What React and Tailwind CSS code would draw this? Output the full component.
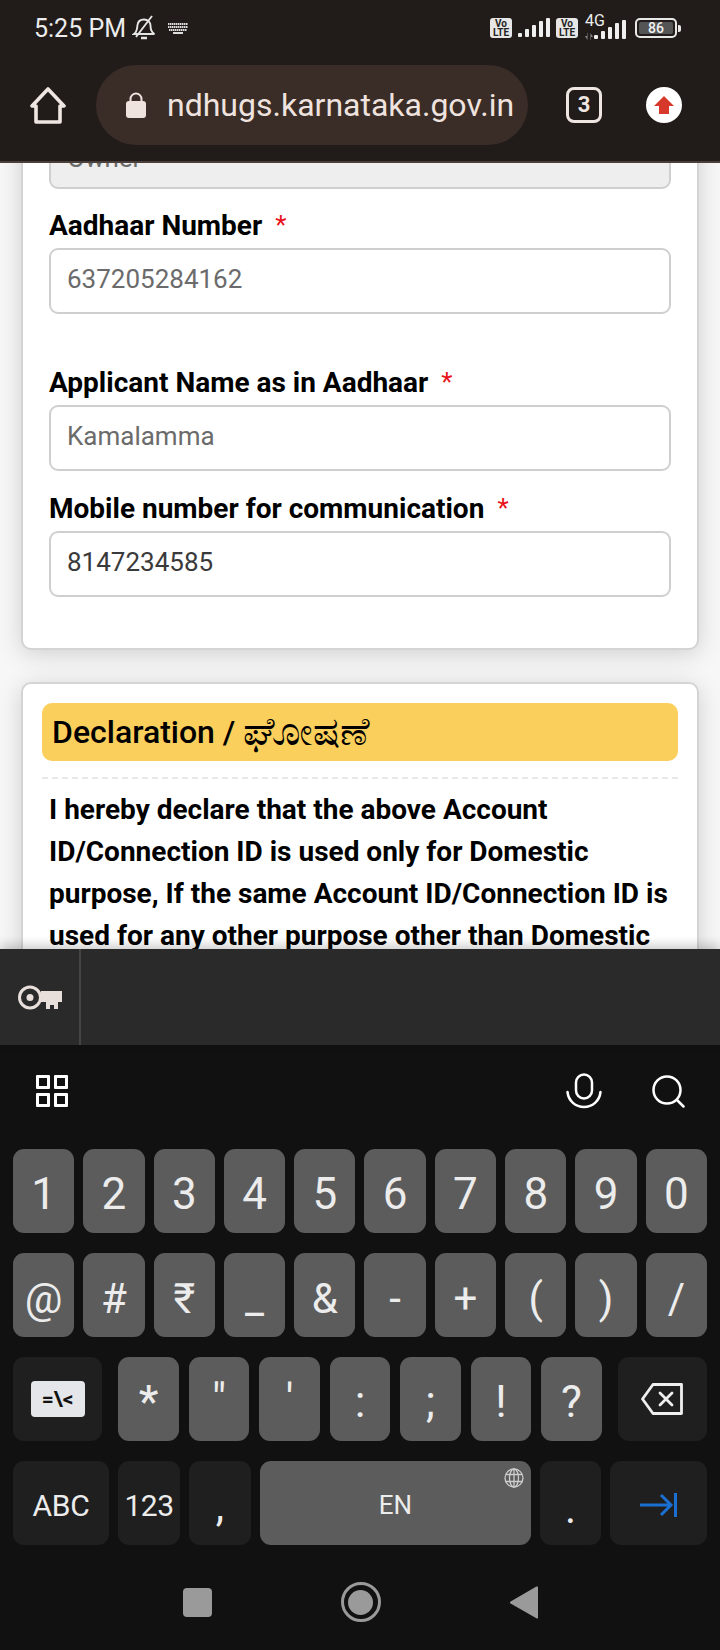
import { ChevronDown } from 'lucide-react';

const row1 = ['1', '2', '3', '4', '5', '6', '7', '8', '9', '0'];
const row2 = ['@', '#', '₹', '_', '&', '-', '+', '(', ')', '/'];
const row3 = ['*', '"', "'", ':', ';', '!', '?'];

function Signal() {
  return (
    <svg width="32" height="20" viewBox="0 0 32 20" fill="#efefef">
      <rect x="0" y="15" width="4" height="4" rx="1" />
      <rect x="7" y="11" width="4" height="8" rx="1" />
      <rect x="14" y="7" width="4" height="12" rx="1" />
      <rect x="21" y="3" width="4" height="16" rx="1" />
      <rect x="28" y="0" width="4" height="19" rx="1" />
    </svg>
  );
}

function VoLte() {
  return (
    <div className="w-[22px] h-[20px] bg-[#e6e6e6] rounded-[3px] flex flex-col items-center justify-center text-[#222] text-[10px] leading-[9px] font-bold">
      <span>Vo</span>
      <span>LTE</span>
    </div>
  );
}

function StatusBar() {
  return (
    <div className="h-[56px] flex items-center pl-[34px] pr-[39px] text-[#ececec]">
      <span className="text-[25px] leading-none">5:25 PM</span>
      <svg className="ml-[6px]" width="24" height="26" viewBox="0 0 24 26" fill="none" stroke="#e4e4e4" strokeWidth="1.900">
        <path d="M2 19c3-2 3-5 3.500-9C6 6 9 4.500 12 4.500c4 0 6.500 3 6.500 6 0 4 1 7 4 8.500H2z" />
        <path d="M20 1L4 22" />
        <path d="M9 23h6" strokeWidth="2.500" />
      </svg>
      <svg className="ml-[12px]" width="20" height="11" viewBox="0 0 20 11" fill="none" stroke="#dcdcdc" strokeWidth="2">
        <path d="M0 1h20M0 4h20M1 7h18" strokeDasharray="1.500 0.500" />
        <path d="M5 10h10" />
      </svg>
      <div className="ml-auto flex items-center">
        <VoLte />
        <div className="ml-[6px]"><Signal /></div>
        <div className="ml-[6px]"><VoLte /></div>
        <div className="ml-[6px] relative w-[42px] h-[23px] flex items-end justify-end">
          <span className="absolute left-[1px] top-[-4px] text-[16px] leading-[16px]">4G</span>
          <svg className="absolute left-0 bottom-0" width="11" height="7" viewBox="0 0 11 7" fill="#8a8a8a">
            <path d="M3 0v3H1L3.500 7V0zM7 7V4h2L6.500 0v7z" />
          </svg>
          <Signal />
        </div>
        <div className="ml-[9px] w-[42px] h-[20px] border-2 border-[#e8e8e8] rounded-[5px] p-[2px]">
          <div className="h-full bg-[#555] rounded-[2px] flex items-center justify-center text-[14px] leading-none font-medium text-[#f0f0f0]">86</div>
        </div>
        <div className="ml-[1px] w-[3px] h-[7px] bg-[#e8e8e8] rounded-r-[2px]" />
      </div>
    </div>
  );
}

function Toolbar() {
  return (
    <div className="h-[107px] flex items-start pt-[9px] pl-[30px] border-b-2 border-[#4a3f3a]">
      <svg className="mt-[22px]" width="36" height="37" viewBox="0 0 36 37" fill="none" stroke="#efe6e2" strokeWidth="3.600" strokeLinejoin="round" strokeLinecap="round">
        <path d="M2 19L18 2l16 17h-4v16H6V19z" />
      </svg>
      <div className="ml-[30px] w-[432px] h-[80px] rounded-full bg-[#3a2c27] flex items-center pl-[30px]">
        <svg width="20" height="26" viewBox="0 0 20 26" fill="#efe3df">
          <path d="M4.500 10V7a5.500 5.500 0 0 1 11 0v3" fill="none" stroke="#efe3df" strokeWidth="2" />
          <rect x="0" y="9" width="20" height="17" rx="3" />
        </svg>
        <span className="ml-[21px] text-[32px] leading-none text-[#efe3df]">ndhugs.karnataka.gov.in</span>
      </div>
      <div className="ml-[38px] mt-[22px] w-[36px] h-[36px] border-[3px] border-[#efe6e2] rounded-[8px] flex items-center justify-center text-[#efe6e2] text-[22px] font-bold leading-none">3</div>
      <div className="ml-[44px] mt-[22px] w-[36px] h-[36px] rounded-full bg-white flex items-center justify-center">
        <svg width="20" height="18" viewBox="0 0 20 18" fill="#d6392b">
          <path d="M10 0l10 10h-5v8H5v-8H0z" />
        </svg>
      </div>
    </div>
  );
}

function Field({ label, value, dark, className }) {
  return (
    <div className={className}>
      <div className="h-[26px] flex items-center text-[28px] font-bold text-black leading-none">
        {label}
        <span className="ml-[13px] text-[#e8131b] font-normal text-[26px] self-start leading-[24px]">*</span>
      </div>
      <div className={`mt-[9px] h-[66px] border-2 border-[#cfcfcf] rounded-[9px] bg-white flex items-center px-[16px] pb-[3px] text-[26px] ${dark ? 'text-[#3a3a3a]' : 'text-[#6b6b6b]'}`}>
        {value}
      </div>
    </div>
  );
}

function Page() {
  return (
    <div className="h-[786px] overflow-hidden bg-[#f7f7f7] px-[21px]">
      <div className="-mt-[40px] h-[527px] bg-white border-2 border-[#d4d4d4] rounded-[10px] px-[26px] shadow-[0_4px_24px_rgba(0,0,0,0.16)]">
        <div className="h-[66px] -mt-[2px] border-2 border-[#cfcfcf] rounded-[9px] bg-[#eeeeee] flex items-center justify-between pl-[16px] pr-[10px] pt-[5px] text-[26px] text-[#6b6b6b]">
          Owner
          <ChevronDown size={14} className="text-[#555]" />
        </div>
        <Field className="mt-[24px]" label="Aadhaar Number" value="637205284162" />
        <Field className="mt-[56px]" label="Applicant Name as in Aadhaar" value="Kamalamma" />
        <Field className="mt-[25px]" label="Mobile number for communication" value="8147234585" dark />
      </div>
      <div className="mt-[32px] bg-white border-2 border-[#d4d4d4] rounded-[10px] px-[19px] pt-[19px] h-[400px] shadow-[0_4px_24px_rgba(0,0,0,0.16)]">
        <div className="h-[58px] bg-[#fbcf5b] rounded-[10px] flex items-center pl-[10px] text-[32px] font-medium text-black leading-none font-[Roboto,'Noto_Sans','DejaVu_Sans',sans-serif]">
          Declaration /&nbsp;<span className="text-[40px] font-normal">ಘೋಷಣೆ</span>
        </div>
        <div className="mt-[16px] border-t-2 border-dashed border-[#e8e8e8]" />
        <p className="mt-[10px] pl-[7px] text-[28px] leading-[42px] font-bold text-black">
          I hereby declare that the above Account ID/Connection ID is used only for Domestic purpose, If the same Account ID/Connection ID is used for any other purpose other than Domestic
        </p>
      </div>
    </div>
  );
}

function Key({ w, dark, text, className, children }) {
  return (
    <div
      className={`${w || ''} h-[84px] rounded-[11px] flex items-center justify-center text-[#ececec] ${dark ? 'bg-[#1f1f1f]' : 'bg-[#5c5c5c]'} ${text || 'text-[44px]'} ${className || ''}`}
    >
      {children}
    </div>
  );
}

function Keyboard() {
  return (
    <div className="flex-1 bg-[#111111]">
      <div className="h-[104px] flex items-center pl-[36px] pr-[37px] pb-[12px]">
        <div className="grid grid-cols-2 gap-[4px]">
          <div className="w-[14px] h-[14px] border-[3px] border-white rounded-[1px]" />
          <div className="w-[14px] h-[14px] border-[3px] border-white rounded-[1px]" />
          <div className="w-[14px] h-[14px] border-[3px] border-white rounded-[1px]" />
          <div className="w-[14px] h-[14px] border-[3px] border-white rounded-[1px]" />
        </div>
        <svg className="ml-auto" width="36" height="36" viewBox="0 0 36 36" fill="none" stroke="white" strokeWidth="2.500" strokeLinecap="round">
          <rect x="10" y="1.500" width="16" height="24" rx="8" />
          <path d="M1.500 19c1 9 8 15 16.500 15s15.500-6 16.500-15" />
        </svg>
        <svg className="ml-[50px] -mr-[2px]" width="33" height="33" viewBox="0 0 33 33" fill="none" stroke="white" strokeWidth="2.500" strokeLinecap="round">
          <circle cx="15" cy="15" r="13.500" />
          <path d="M25 25l6.500 6.500" />
        </svg>
      </div>

      <div className="px-[13px] flex flex-col gap-5">
        <div className="grid grid-cols-10 gap-[9px]">
          {row1.map((k) => (
            <Key key={k} className="pt-[6px]">{k}</Key>
          ))}
        </div>
        <div className="grid grid-cols-10 gap-[9px]">
          {row2.map((k) => (
            <Key key={k} text="text-[42px]" className="pt-[6px]">{k}</Key>
          ))}
        </div>
        <div className="flex">
          <Key w="w-[90px]" dark>
            <div className="w-[54px] h-[36px] rounded-[4px] bg-[#e4e6ea] flex items-center justify-center text-[#111] text-[21px] font-bold leading-none">=\&lt;</div>
          </Key>
          <div className="ml-[16px] flex gap-[10px]">
            {row3.map((k) => (
              <Key key={k} w="w-[60.500px]" className={k === '"' || k === "'" ? 'pt-[2px]' : k === '*' ? 'pt-[6px] font-medium' : 'pt-[6px]'}>{k}</Key>
            ))}
          </div>
          <Key w="w-[90px] ml-[16px]" dark>
            <svg width="42" height="32" viewBox="0 0 42 32" fill="none" stroke="#efefef" strokeWidth="2.800" strokeLinejoin="round">
              <path d="M12 1.500h28.500v29H12L1.500 16z" />
              <path d="M19 10l12 12M31 10L19 22" strokeLinecap="round" />
            </svg>
          </Key>
        </div>
        <div className="flex gap-[9px]">
          <Key w="w-[96px]" dark text="text-[30px]" className="tracking-[-0.2px] pt-[4px]">ABC</Key>
          <Key w="w-[62px]" dark text="text-[30px]" className="tracking-[-0.6px] pt-[4px]">123</Key>
          <Key w="w-[62px]" dark text="text-[42px]" className="pt-[6px]">,</Key>
          <Key w="w-[271px]" text="text-[26px]" className="relative pt-[4px]">
            EN
            <svg className="absolute right-[7px] top-[7px]" width="20" height="20" viewBox="0 0 20 20" fill="none" stroke="#cccccc" strokeWidth="1.300">
              <circle cx="10" cy="10" r="9" />
              <ellipse cx="10" cy="10" rx="4.500" ry="9" />
              <path d="M10 1v18M2 6.500h16M2 13.500h16" />
            </svg>
          </Key>
          <Key w="w-[61px]" dark text="text-[42px]" className="pt-[10px]">.</Key>
          <Key w="w-[97px]" dark className="pt-[4px]">
            <svg width="37" height="24" viewBox="0 0 37 24" fill="none" stroke="#1a6fd0" strokeWidth="3">
              <path d="M0 12h31M21 2l10 10-10 10M35.500 0v24" />
            </svg>
          </Key>
        </div>
      </div>

      <div className="h-[104px] flex items-center justify-center gap-[129px] pt-[10px]">
        <div className="w-[29px] h-[29px] rounded-[4px] bg-[#9a9a9a]" />
        <div className="w-[40px] h-[40px] rounded-full border-[3px] border-[#9a9a9a] flex items-center justify-center">
          <div className="w-[25px] h-[25px] rounded-full bg-[#9a9a9a]" />
        </div>
        <svg width="28" height="33" viewBox="0 0 28 33" fill="#9a9a9a">
          <path d="M27 0.500c.6 0 1 .4 1 1v30c0 .7-.5 1.200-1.200.9L.6 17.500c-.8-.5-.8-1.400 0-2L26 .8c.4-.2.700-.3 1-.3z" />
        </svg>
      </div>
    </div>
  );
}

export default function App() {
  return (
    <div className="w-[720px] h-[1650px] overflow-hidden flex flex-col font-[Roboto,sans-serif]">
      <div className="relative z-10 bg-[#211c1a]">
        <StatusBar />
        <Toolbar />
      </div>
      <Page />
      <div className="relative z-10 h-[96px] bg-[#2a2a2a] flex shadow-[0_-4px_10px_rgba(0,0,0,0.2)]">
        <div className="w-[81px] border-r-2 border-[#444] flex items-center justify-center">
          <svg width="44" height="25" viewBox="0 0 44 25" fill="none">
            <circle cx="12" cy="12.500" r="10.500" stroke="#e8dfdb" strokeWidth="3" />
            <circle cx="12" cy="12.500" r="3.500" fill="#e8dfdb" />
            <path d="M23 6h21v11h-4v7h-4v-4h-4v4h-4v-7h-5z" fill="#e8dfdb" />
          </svg>
        </div>
      </div>
      <Keyboard />
    </div>
  );
}
